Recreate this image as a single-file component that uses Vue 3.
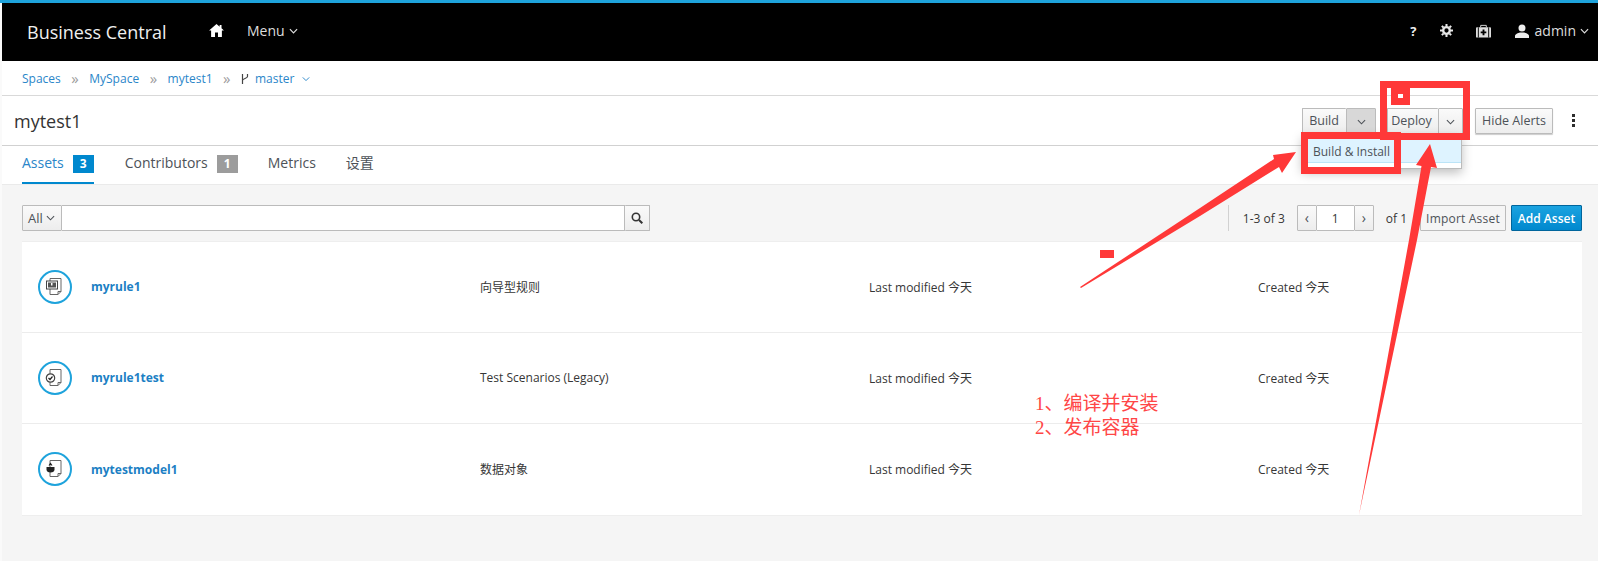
<script setup>
const rows = [
  { name: 'myrule1', type: '向导型规则', icon: 'guided' },
  { name: 'myrule1test', type: 'Test Scenarios (Legacy)', icon: 'test' },
  { name: 'mytestmodel1', type: '数据对象', icon: 'model' },
]
</script>

<template>
  <div class="page">
    <header class="navbar">
      <span class="brand">Business Central</span>
      <svg class="home" viewBox="0 0 16 14"><path d="M8 0 0 7h2.200v7h4.200V9.200h3.200V14h4.200V7H16l-2.600-2.300V1h-2v1.900z" fill="#fff"/></svg>
      <span class="menu">Menu
        <svg class="chev" viewBox="0 0 10 6"><path d="M1 1l4 4 4-4" fill="none" stroke="currentColor" stroke-width="1.300"/></svg>
      </span>
      <div class="nav-right">
        <span class="help">?</span>
        <svg class="cog" viewBox="0 0 14 14"><circle cx="7" cy="7" r="3.600" fill="none" stroke="#e8e8e8" stroke-width="2.600"/><path d="M7 0v14M0 7h14M2 2l10 10M12 2 2 12" stroke="#e8e8e8" stroke-width="2.200" stroke-dasharray="2.400 9.400 2.400"/></svg>
        <svg class="case" viewBox="0 0 16 14"><path d="M5 3V1h6v2" fill="none" stroke="#ddd" stroke-width="1"/><rect x="0" y="3" width="16" height="11" rx="1" fill="#ddd"/><path d="M2.500 3v11M13.500 3v11" stroke="#000"/><path d="M8 5.500v6M5 8.500h6" stroke="#000" stroke-width="2"/></svg>
        <svg class="user" viewBox="0 0 14 14"><circle cx="7" cy="4" r="3.500" fill="#eee"/><path d="M0 14v-2c0-2 3-3 5-3.500h4c2 .5 5 1.500 5 3.500v2z" fill="#eee"/></svg>
        <span class="admin">admin
          <svg class="chev" viewBox="0 0 10 6"><path d="M1 1l4 4 4-4" fill="none" stroke="currentColor" stroke-width="1.300"/></svg>
        </span>
      </div>
    </header>

    <nav class="crumbs">
      <a>Spaces</a><i>»</i><a>MySpace</a><i>»</i><a>mytest1</a><i>»</i>
      <svg class="branch" viewBox="0 0 8 12"><path d="M1.500 1v10M6.500 1v2.500c0 2-5 2-5 4" fill="none" stroke="#444" stroke-width="1.200"/></svg>
      <a class="master">master</a>
      <svg class="chev blue" viewBox="0 0 10 6"><path d="M1 1l4 4 4-4" fill="none" stroke="currentColor" stroke-width="1.200"/></svg>
    </nav>

    <section class="titlebar">
      <h1>mytest1</h1>
      <div class="actions">
        <div class="split">
          <button>Build</button>
          <button class="toggle open"><svg class="chev" viewBox="0 0 10 6"><path d="M1 1l4 4 4-4" fill="none" stroke="currentColor" stroke-width="1.200"/></svg></button>
          <div class="dropdown"><div class="item">Build &amp; Install</div></div>
        </div>
        <div class="split deploy">
          <button>Deploy</button>
          <button class="toggle"><svg class="chev" viewBox="0 0 10 6"><path d="M1 1l4 4 4-4" fill="none" stroke="currentColor" stroke-width="1.200"/></svg></button>
        </div>
        <button class="hide">Hide Alerts</button>
        <span class="kebab"><b></b><b></b><b></b></span>
      </div>
    </section>

    <div class="tabs">
      <span class="tab active">Assets<em>3</em></span>
      <span class="tab">Contributors<em class="gray">1</em></span>
      <span class="tab">Metrics</span>
      <span class="tab">设置</span>
    </div>

    <main class="content">
      <div class="toolbar">
        <button class="all">All <svg class="chev" viewBox="0 0 10 6"><path d="M1 1l4 4 4-4" fill="none" stroke="currentColor" stroke-width="1.200"/></svg></button>
        <div class="search-input"></div>
        <button class="search"><svg viewBox="0 0 12 12"><circle cx="5" cy="5" r="3.700" fill="none" stroke="#333" stroke-width="1.600"/><path d="M8 8l3.300 3.300" stroke="#333" stroke-width="2"/></svg></button>
        <div class="pager">
          <span class="count">1-3 of 3</span>
          <button class="pg">‹</button>
          <div class="pg-input">1</div>
          <button class="pg">›</button>
          <span class="of">of 1</span>
        </div>
        <button class="import">Import Asset</button>
        <button class="add">Add Asset</button>
      </div>

      <div class="list">
        <div v-for="r in rows" :key="r.name" class="row">
          <span class="ring">
            <svg viewBox="0 0 20 20">
              <path d="M5 1.500h11v13l-3 3H5z" fill="#fff" stroke="#666" stroke-width="1"/>
              <path d="M16 14.500h-3v3" fill="none" stroke="#666"/>
              <g v-if="r.icon === 'guided'">
                <rect x="1.500" y="4" width="11" height="8" fill="#fff" stroke="#444" stroke-width="1"/>
                <rect x="3" y="5.500" width="8" height="5" fill="#555"/>
                <rect x="6" y="6" width="1.500" height="2.500" fill="#fff"/>
              </g>
              <g v-else-if="r.icon === 'test'">
                <circle cx="5.500" cy="10" r="4.200" fill="#fff" stroke="#444" stroke-width="1.200"/>
                <path d="M3.500 10l1.500 1.500 2.500-3" fill="none" stroke="#222" stroke-width="1.200"/>
              </g>
              <g v-else>
                <path d="M1.500 8h8v2.500c0 2-1.500 3-4 3s-4-1-4-3z" fill="#222"/>
                <path d="M4 6.500 5.500 4.500 7 6.500" fill="none" stroke="#222" stroke-width="1.200"/>
              </g>
            </svg>
          </span>
          <a class="name">{{ r.name }}</a>
          <span class="type">{{ r.type }}</span>
          <span class="mod">Last modified 今天</span>
          <span class="created">Created 今天</span>
        </div>
      </div>
    </main>

    <div class="note">1、编译并安装<br />2、发布容器</div>

    <svg class="marks" viewBox="0 0 1598 561">
      <g fill="#ff3838">
        <path d="M1080 287 1200 208 1274 159 1273 155 1296 152 1282 173 1279 167 1200 216 1081 288z"/>
        <path d="M1359 515 1409 240 1421.500 166 1416 165 1430 144 1437 168 1431 167 1417 240z"/>
      </g>
      <g fill="none" stroke="#ff3838" stroke-width="7">
        <rect x="1383.500" y="84.500" width="83" height="52"/>
        <rect x="1304.500" y="135.500" width="93" height="35"/>
      </g>
      <rect x="1391" y="88" width="19" height="17" fill="#ff3838"/>
      <rect x="1398" y="94" width="5" height="4" fill="#fff"/>
      <rect x="1100" y="250" width="14" height="8" fill="#ff3838"/>
    </svg>
  </div>
</template>

<style>
html, body { margin: 0; background: #fff; }
</style>

<style scoped>
.page {
  position: relative;
  width: 1598px;
  height: 561px;
  overflow: hidden;
  box-sizing: border-box;
  padding-left: 2px;
  background: #fafafa;
  border-top: 3px solid #1ea3dc;
  font-family: "Open Sans", "Noto Sans CJK SC", sans-serif;
  font-size: 12px;
  color: #363636;
  display: flex;
  flex-direction: column;
}
.note {
  position: absolute;
  left: 1035px;
  top: 389px;
  font-family: "Liberation Serif", "Noto Sans CJK SC", serif;
  font-size: 19px;
  line-height: 24px;
  color: #ff4646;
}
.marks {
  position: absolute;
  left: 0;
  top: -3px;
  width: 1598px;
  height: 561px;
  pointer-events: none;
  z-index: 5;
}
.navbar {
  height: 58px;
  flex: none;
  background: #000;
  display: flex;
  align-items: center;
  color: #ddd;
  padding-left: 25px;
}
.brand { font-size: 18px; color: #f0f0f0; width: 182px; }
.home { width: 15px; height: 13px; margin-right: 23px; margin-top: -3px; }
.menu { font-size: 14px; display: flex; align-items: center; gap: 4px; margin-top: -3px; }
.chev { width: 9px; height: 6px; flex: none; }
.nav-right { margin-left: auto; display: flex; align-items: center; margin-top: -3px; padding-right: 9px; }
.help { font-weight: 700; font-size: 13px; color: #eee; margin-right: 23px; }
.cog { width: 13px; height: 13px; margin-right: 23px; }
.case { width: 15px; height: 14px; margin-right: 24px; }
.user { width: 14px; height: 14px; margin-right: 6px; }
.admin { font-size: 14px; display: flex; align-items: center; gap: 4px; }
.crumbs {
  height: 35px;
  flex: none;
  display: flex;
  align-items: center;
  padding: 1px 0 0 20px;
  background: #fff;
  border-bottom: 1px solid #d9d9d9;
  box-sizing: border-box;
}
.crumbs a { color: #2a86c9; }
.crumbs i { font-style: normal; color: #9c9c9c; margin: 0 10.500px; font-size: 15px; line-height: 1; }
.branch { width: 8px; height: 12px; margin-right: 6px; }
.master { margin-right: 8px; }
.chev.blue { color: #2a86c9; width: 8px; }
.titlebar {
  height: 50px;
  flex: none;
  box-sizing: border-box;
  background: #fff;
  border-bottom: 1px solid #d1d1d1;
  display: flex;
  align-items: center;
  padding-left: 12px;
}
h1 { font-size: 18px; font-weight: 400; margin: 0; color: #333; }
.actions { margin-left: auto; display: flex; align-items: center; margin-right: 23px; }
.actions button { font-size: 12.500px; }
button {
  font-family: inherit;
  font-size: 12px;
  color: #4d5258;
  height: 26px;
  padding: 0 6px;
  box-sizing: border-box;
  border: 1px solid #bbb;
  background: linear-gradient(#fafafa, #ededed);
  border-radius: 1px;
}
.split { display: flex; position: relative; }
.split button:first-child { border-right: 0; width: 44px; padding: 0 1px 0 0; }
.split .toggle { width: 30px; padding: 0; border-left: 1px solid #bbb; }
.toggle.open { background: #d8d8d8; }
.deploy { margin-left: 11px; }
.deploy button:first-child { width: 51px; padding: 0 3px 0 0; }
.deploy .toggle { width: 25px; }
.hide { margin-left: 12px; width: 78px; padding: 0; box-shadow: 0 1px 1px #ccc; }
.kebab { margin-left: 19px; display: flex; flex-direction: column; gap: 2px; width: 3px; }
.kebab b { width: 3px; height: 3px; background: #2d2d2d; }
.dropdown {
  position: absolute;
  top: 26px;
  left: 0;
  width: 160px;
  height: 35px;
  box-sizing: border-box;
  background: #fff;
  border: 1px solid #bbb;
  box-shadow: 0 4px 10px rgba(0, 0, 0, 0.25);
  z-index: 2;
}
.item {
  height: 21px;
  background: #def3ff;
  border-bottom: 1px solid #bce4f7;
  padding: 6px 0 0 10px;
  line-height: 21px;
  color: #4d5258;
}
.tabs {
  height: 39px;
  flex: none;
  box-sizing: border-box;
  display: flex;
  padding-left: 20px;
  background: #fff;
  border-bottom: 1px solid #eaeaea;
}
.tab { font-size: 14px; color: #4d5258; line-height: 34px; margin-right: 30px; height: 38px; display: block; box-sizing: border-box; }
.tab:nth-child(1) { margin-right: 31px; }
.tab em {
  display: inline-block;
  font-style: normal;
  font-weight: 700;
  font-size: 12px;
  width: 21px;
  height: 18px;
  line-height: 18px;
  text-align: center;
  color: #fff;
  background: #0088ce;
  margin-left: 9px;
}
.tab em.gray { background: #9c9c9c; }
.tab.active { color: #2a86c9; border-bottom: 2px solid #0088ce; }
.content { flex: 1; background: #f5f5f5; padding: 20px 16px 0 20px; min-height: 0; }
.toolbar { display: flex; align-items: center; height: 26px; }
.all { width: 40px; padding: 0 5px; display: flex; align-items: center; gap: 3px; font-size: 13px; }
.search-input { width: 563px; height: 26px; box-sizing: border-box; background: #fff; border: 1px solid #bbb; border-left: 0; }
.search { width: 25px; padding: 0; border-left: 0; display: flex; align-items: center; justify-content: center; }
.search svg { width: 12px; height: 12px; }
.pager { margin-left: auto; display: flex; align-items: center; border-left: 1px solid #d1d1d1; padding-left: 14px; height: 26px; }
.count { margin-right: 12px; }
.pg { width: 20px; padding: 0; font-size: 14px; line-height: 1; }
.pg-input { width: 37px; height: 26px; line-height: 26px; box-sizing: border-box; background: #fff; border-top: 1px solid #bbb; border-bottom: 1px solid #bbb; text-align: center; }
.of { margin-left: 12px; margin-right: 13px; }
.import { width: 86px; padding: 0; margin-right: 5px; background: #f5f5f5; letter-spacing: .2px; }
.add { width: 71px; padding: 0; background: linear-gradient(#1ba3e0, #0088ce); border-color: #00659c; color: #fff; font-weight: 600; }
.list { margin-top: 10px; background: #fff; border: 1px solid #eee; border-width: 1px 0; }
.row {
  height: 91px;
  box-sizing: border-box;
  display: flex;
  align-items: center;
  padding-bottom: 1px;
  border-bottom: 1px solid #ececec;
}
.row:last-child { border-bottom: 0; }
.ring {
  width: 34px;
  height: 34px;
  box-sizing: border-box;
  border: 2px solid #1ea3dc;
  border-radius: 50%;
  margin-left: 16px;
  display: flex;
  align-items: center;
  justify-content: center;
  flex: none;
}
.ring svg { width: 20px; height: 20px; }
.name { width: 389px; margin-left: 19px; color: #1c7fc4; font-weight: 700; flex: none; }
.type { width: 389px; flex: none; }
.mod { width: 389px; flex: none; }
</style>
